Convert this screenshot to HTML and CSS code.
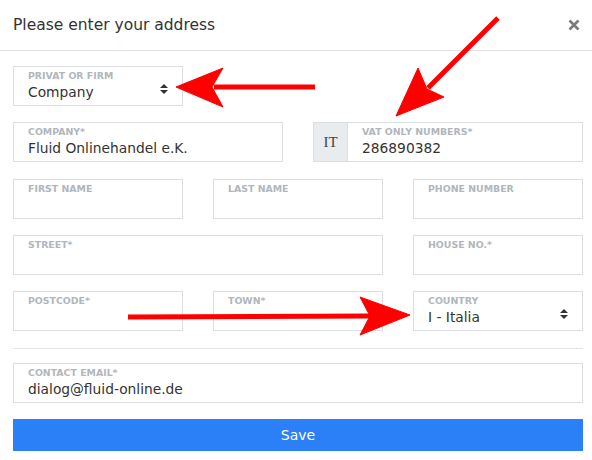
FILE: index.html
```html
<!DOCTYPE html>
<html lang="en">
<head>
    <meta charset="UTF-8">
    <title>Address</title>
    <link rel="stylesheet" href="styles.css">
</head>
<body>
    <div class="modal">
        <div class="modal-header">
            <h2>Please enter your address</h2>
            <button type="button" class="close-btn" aria-label="Close">
                <svg width="12" height="12" viewBox="0 0 12 12"><path d="M1.5 1.5L10.5 10.5M10.5 1.5L1.5 10.5" stroke="#7a7a7a" stroke-width="2.6"/></svg>
            </button>
        </div>

        <form class="modal-body" id="address-form">
            <div class="grid">
                <label class="field span-2">
                    <span class="field-label">Privat or firm</span>
                    <select name="type">
                        <option>Private</option>
                        <option selected>Company</option>
                    </select>
                    <svg class="caret" width="8" height="12" viewBox="0 0 8 12"><path d="M4 1L8 5H0Z M4 11L0 7H8Z" fill="#333"/></svg>
                </label>
                <div class="span-4"></div>

                <label class="field span-3">
                    <span class="field-label">Company*</span>
                    <input type="text" name="company" value="Fluid Onlinehandel e.K.">
                </label>
                <div class="input-group span-3">
                    <span class="addon">IT</span>
                    <label class="field">
                        <span class="field-label">VAT only numbers*</span>
                        <input type="text" name="vat" value="286890382">
                    </label>
                </div>

                <label class="field span-2">
                    <span class="field-label">First name</span>
                    <input type="text" name="first-name">
                </label>
                <label class="field span-2">
                    <span class="field-label">Last name</span>
                    <input type="text" name="last-name">
                </label>
                <label class="field span-2">
                    <span class="field-label">Phone number</span>
                    <input type="text" name="phone">
                </label>

                <label class="field span-4">
                    <span class="field-label">Street*</span>
                    <input type="text" name="street">
                </label>
                <label class="field span-2">
                    <span class="field-label">House no.*</span>
                    <input type="text" name="house">
                </label>

                <label class="field span-2">
                    <span class="field-label">Postcode*</span>
                    <input type="text" name="postcode">
                </label>
                <label class="field span-2">
                    <span class="field-label">Town*</span>
                    <input type="text" name="town">
                </label>
                <label class="field span-2">
                    <span class="field-label">Country</span>
                    <select name="country">
                        <option>D - Deutschland</option>
                        <option selected>I - Italia</option>
                    </select>
                    <svg class="caret" width="8" height="12" viewBox="0 0 8 12"><path d="M4 1L8 5H0Z M4 11L0 7H8Z" fill="#333"/></svg>
                </label>
            </div>

            <hr class="divider">

            <label class="field">
                <span class="field-label">Contact email*</span>
                <input type="email" name="email" value="dialog@fluid-online.de">
            </label>

            <button type="button" class="save-btn">Save</button>
        </form>
    </div>

    <!-- red annotation arrows drawn over the form -->
    <svg class="arrows" width="592" height="460" viewBox="0 0 592 460">
        <g fill="#f00" stroke="#f00" stroke-linejoin="round">
            <line x1="315" y1="87" x2="214" y2="87" stroke-width="5"/>
            <polygon points="176,87 223,68 212,87 223,107" stroke-width="1"/>

            <line x1="498" y1="18" x2="428" y2="88" stroke-width="5"/>
            <polygon points="396,116 418,68 427,89 444,97" stroke-width="1"/>

            <line x1="128" y1="317" x2="370" y2="316" stroke-width="5"/>
            <polygon points="410,315 360,297 370,316 360,335" stroke-width="1"/>
        </g>
    </svg>
</body>
</html>
```

FILE: styles.css
```css
body {
    margin: 0;
    background: #fff;
    font-family: 'DejaVu Sans', Verdana, sans-serif;
    color: #333;
}

.modal {
    width: 592px;
}

.modal-header {
    display: flex;
    justify-content: space-between;
    align-items: center;
    height: 50px;
    padding: 0 12px 0 13px;
    border-bottom: 1px solid #e2e2e2;
}

.modal-header h2 {
    margin: 0;
    font-size: 15.5px;
    font-weight: normal;
    color: #333;
}

.close-btn {
    border: none;
    background: none;
    padding: 0;
    cursor: pointer;
    display: flex;
}

.modal-body {
    padding: 15px 9px 0 13px;
}

.grid {
    display: grid;
    grid-template-columns: repeat(6, 1fr);
    column-gap: 30px;
    row-gap: 16.3px;
}

.span-2 { grid-column: span 2; }
.span-3 { grid-column: span 3; }
.span-4 { grid-column: span 4; }

.field {
    position: relative;
    display: block;
    height: 40px;
    box-sizing: border-box;
    padding: 3px 14px 0;
    border: 1px solid #dcdfe2;
    background: #fff;
}

.field-label {
    display: block;
    font-size: 9.4px;
    font-weight: bold;
    text-transform: uppercase;
    color: #b1b6bc;
    line-height: 12px;
}

.field input,
.field select {
    display: block;
    width: 100%;
    border: none;
    outline: none;
    padding: 0;
    margin: 1px 0 0;
    font-family: 'DejaVu Sans', Verdana, sans-serif;
    font-size: 13.8px;
    line-height: 19px;
    height: 19px;
    color: #333;
    background: transparent;
    appearance: none;
    -webkit-appearance: none;
}

.caret {
    position: absolute;
    right: 14px;
    top: 16px;
    pointer-events: none;
}

.input-group {
    display: flex;
}

.input-group .field {
    flex: 1;
    border-left: none;
}

.addon {
    width: 35px;
    box-sizing: border-box;
    display: flex;
    align-items: center;
    justify-content: center;
    border: 1px solid #dcdfe2;
    background: #e9ecef;
    font-family: 'Liberation Serif', serif;
    font-size: 15px;
    color: #444;
}

.divider {
    border: none;
    border-top: 1px solid #e2e2e2;
    margin: 17px 0 14px;
}

.save-btn {
    display: block;
    width: 100%;
    height: 32px;
    margin-top: 16px;
    border: none;
    background: #2b80f8;
    color: #fff;
    font-family: 'DejaVu Sans', Verdana, sans-serif;
    font-size: 14px;
    cursor: pointer;
}

.arrows {
    position: absolute;
    left: 0;
    top: 0;
    pointer-events: none;
}
```
